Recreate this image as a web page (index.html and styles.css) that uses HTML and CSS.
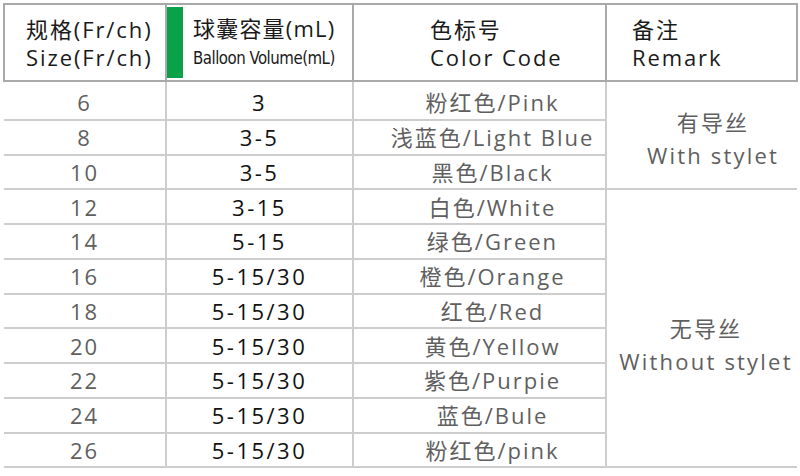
FILE: index.html
```html
<!DOCTYPE html>
<html lang="zh">
<head>
<meta charset="utf-8">
<link rel="stylesheet" href="styles.css">
</head>
<body>
<table class="spec">
  <colgroup>
    <col class="w1"><col class="w2"><col class="w3"><col class="w4">
  </colgroup>
  <thead>
    <tr>
      <th><div class="hd h-size"><div>规格(Fr/ch)</div><div>Size(Fr/ch)</div></div></th>
      <th><div class="hv-wrap"><span class="green"></span><div class="hv-text"><div>球囊容量(mL)</div><div class="cond">Balloon Volume(mL)</div></div></div></th>
      <th><div class="hd h-color"><div>色标号</div><div>Color Code</div></div></th>
      <th><div class="hd h-remark"><div>备注</div><div>Remark</div></div></th>
    </tr>
  </thead>
  <tbody>
    <tr class="first"><td class="c1">6</td><td class="c2">3</td><td class="c3">粉红色/Pink</td><td class="c4 high" rowspan="3"><div>有导丝</div><div>With stylet</div></td></tr>
    <tr><td class="c1">8</td><td class="c2">3-5</td><td class="c3">浅蓝色/Light Blue</td></tr>
    <tr><td class="c1">10</td><td class="c2">3-5</td><td class="c3">黑色/Black</td></tr>
    <tr><td class="c1">12</td><td class="c2">3-15</td><td class="c3">白色/White</td><td class="c4 low" rowspan="8"><div>无导丝</div><div>Without stylet</div></td></tr>
    <tr><td class="c1">14</td><td class="c2">5-15</td><td class="c3">绿色/Green</td></tr>
    <tr><td class="c1">16</td><td class="c2">5-15/30</td><td class="c3">橙色/Orange</td></tr>
    <tr><td class="c1">18</td><td class="c2">5-15/30</td><td class="c3">红色/Red</td></tr>
    <tr><td class="c1">20</td><td class="c2">5-15/30</td><td class="c3">黄色/Yellow</td></tr>
    <tr><td class="c1">22</td><td class="c2">5-15/30</td><td class="c3">紫色/Purpie</td></tr>
    <tr><td class="c1">24</td><td class="c2">5-15/30</td><td class="c3">蓝色/Bule</td></tr>
    <tr><td class="c1">26</td><td class="c2">5-15/30</td><td class="c3">粉红色/pink</td></tr>
  </tbody>
</table>
</body>
</html>
```

FILE: styles.css
```css
html, body {
  margin: 0;
  padding: 0;
  background: #fff;
}
body {
  padding: 3px 0 0 3px;
  font-family: "Open Sans", "Noto Sans CJK SC", sans-serif;
}
.spec {
  border-collapse: collapse;
  table-layout: fixed;
  width: 793px;
}
.w1 { width: 162px; }
.w2 { width: 187px; }
.w3 { width: 253px; }
.w4 { width: 191px; }
.spec th {
  border: 2px solid #a9a9a9;
  font-weight: normal;
  text-align: left;
  color: #1a1a1a;
  font-size: 22px;
  line-height: 28px;
  height: 75px;
  padding: 0;
  vertical-align: middle;
  letter-spacing: 1.9px;
  white-space: nowrap;
}
.h-size { padding-left: 21px; }
.h-color { padding-left: 76px; }
.h-remark { padding-left: 25px; }
.hv-wrap {
  display: flex;
  align-items: stretch;
  height: 71px;
  padding: 1px 0;
}
.green {
  width: 16px;
  background: #0aa14b;
  flex: none;
}
.hv-text {
  padding-left: 10px;
  display: flex;
  flex-direction: column;
  justify-content: center;
  letter-spacing: 1.2px;
}
.cond {
  font-family: "DejaVu Sans Condensed", "Noto Sans CJK SC", sans-serif;
  font-size: 17px;
  letter-spacing: -0.5px;
  transform: scaleX(0.98);
  transform-origin: left center;
  white-space: nowrap;
  padding-top: 2px;
}
.spec td {
  height: 32.75px;
  padding: 0;
  font-size: 22px;
  line-height: 26px;
  text-align: center;
  vertical-align: middle;
  border-bottom: 2px solid #cdcdcd;
  border-right: 2px solid #cdcdcd;
  letter-spacing: 2px;
  color: #5f5f5f;
  white-space: nowrap;
}
.spec tr.first td { padding-top: 4px; }
.spec td.c1 { letter-spacing: 2px; }
.spec td.c2 { color: #111; letter-spacing: 2.5px; }
.spec td.c3 { padding-left: 26px; }
.spec td.c4 { border-right: none; line-height: 33px; letter-spacing: 2.2px; }
.spec tr.first td.high { padding-top: 7px; padding-left: 22px; }
.spec td.low { padding-top: 34px; padding-left: 8px; }
```
